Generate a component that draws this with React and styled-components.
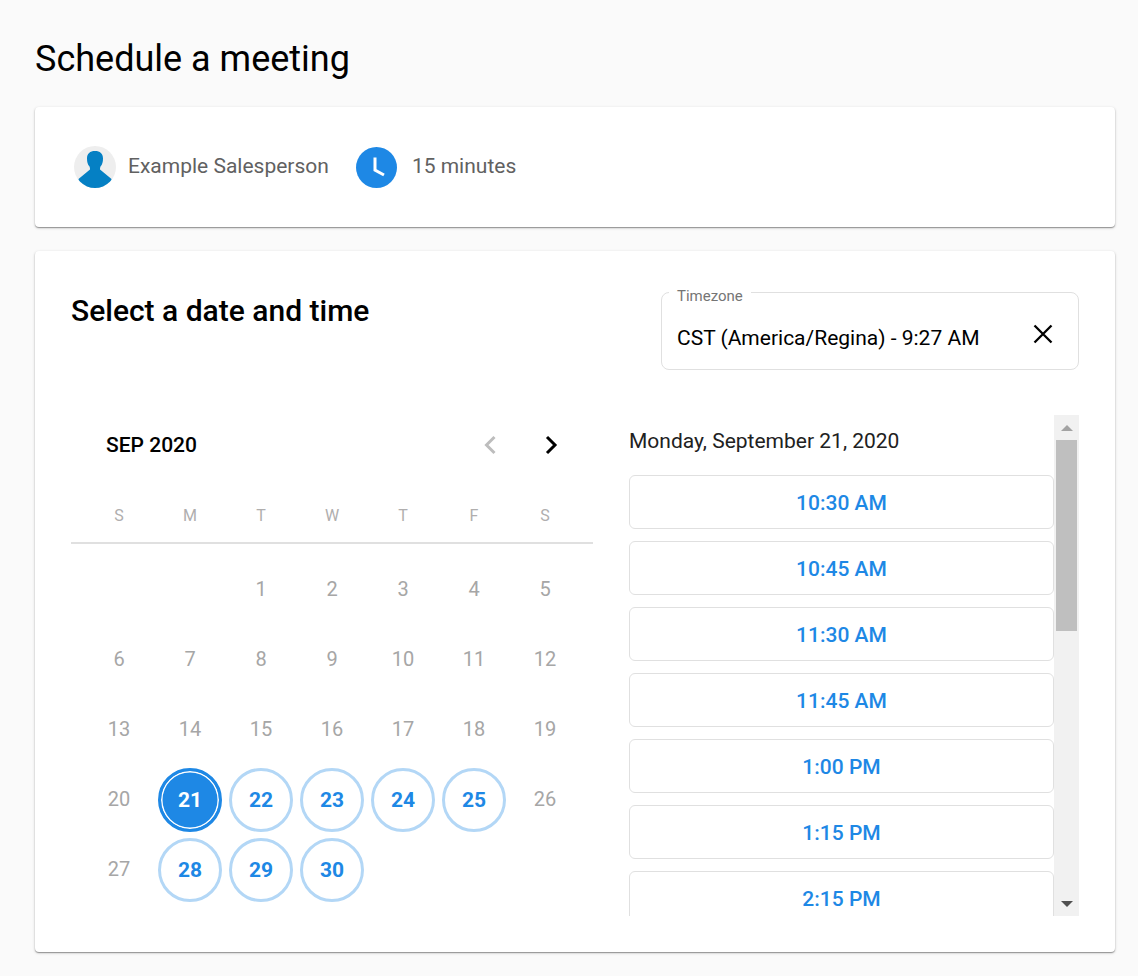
import React from 'react';
import styled, { createGlobalStyle } from 'styled-components';

const Global = createGlobalStyle`
  html, body { margin: 0; padding: 0; background: #fafafa; }
  body { font-family: Roboto, "Liberation Sans", sans-serif; }
  * { box-sizing: border-box; }
`;

const Page = styled.div`
  width: 1138px;
  height: 976px;
  padding: 0 23px 0 35px;
  overflow: hidden;
`;
const Title = styled.h1`
  margin: 0;
  height: 107px;
  padding-top: 39px;
  font-size: 36px;
  line-height: 40px;
  font-weight: 400;
  color: #000;
`;
const Card = styled.section`
  background: #fff;
  border-radius: 4px;
  box-shadow: 0 1px 3px rgba(0,0,0,.22), 0 1px 1px rgba(0,0,0,.3);
`;
const InfoCard = styled(Card)`
  height: 120px;
  display: flex;
  align-items: center;
  padding: 0 39px;
  margin-bottom: 24px;
`;
const Avatar = styled.svg`
  width: 42px;
  height: 42px;
  display: block;
  margin-right: 12px;
`;
const ClockBadge = styled.svg`
  width: 41px;
  height: 41px;
  display: block;
  margin: 0 15px 0 27px;
`;
const InfoText = styled.span`
  font-size: 21px;
  line-height: 22px;
  padding-bottom: 2px;
  color: #616161;
`;
const MainCard = styled(Card)`
  height: 701px;
  padding: 42px 36px 0;
`;
const Header = styled.div`
  display: flex;
  justify-content: space-between;
  align-items: flex-start;
  height: 122px;
`;
const Subtitle = styled.h2`
  margin: 0;
  font-size: 30px;
  line-height: 36px;
  font-weight: 500;
  color: #000;
`;
const TimezoneBox = styled.div`
  position: relative;
  width: 418px;
  height: 78px;
  margin-top: -1px;
  border: 1px solid #e0e0e0;
  border-radius: 8px;
  display: flex;
  align-items: center;
  justify-content: space-between;
  padding: 14px 25px 0 15px;
`;
const TimezoneLabel = styled.label`
  position: absolute;
  top: -6px;
  left: 7px;
  padding: 0 8px;
  background: #fff;
  font-size: 15px;
  line-height: 18px;
  color: #757575;
`;
const TimezoneValue = styled.span`
  font-size: 21px;
  line-height: 24px;
  color: #000;
`;
const CloseIcon = styled.svg`
  width: 20px;
  height: 20px;
  display: block;
  margin-top: -8px;
`;
const Body = styled.div`
  display: flex;
  align-items: flex-start;
`;
const Calendar = styled.div`
  width: 522px;
  margin-right: 36px;
`;
const CalendarHead = styled.div`
  height: 60px;
  display: flex;
  align-items: center;
  justify-content: space-between;
  padding: 0 30px 0 35px;
`;
const MonthLabel = styled.span`
  font-size: 21px;
  font-weight: 500;
  color: #000;
`;
const Arrows = styled.div`
  display: flex;
  gap: 37px;
`;
const Chevron = styled.svg`
  width: 24px;
  height: 24px;
  display: block;
`;
const WeekRow = styled.div`
  display: grid;
  grid-template-columns: repeat(7, 71px);
  justify-content: center;
  height: 69px;
  align-items: center;
  border-bottom: 2px solid #e0e0e0;
  padding-top: 14px;
`;
const WeekDay = styled.span`
  text-align: center;
  font-size: 16px;
  color: #b0aeae;
`;
const DayGrid = styled.div`
  display: grid;
  grid-template-columns: repeat(7, 71px);
  grid-auto-rows: 70px;
  justify-content: center;
  padding-top: 11px;
`;
const DayCell = styled.div`
  display: flex;
  align-items: center;
  justify-content: center;
`;
const DayNumber = styled.span`
  font-size: 20px;
  padding-bottom: 2px;
  color: #a6a6a6;
`;
const DayButton = styled.button`
  width: 64px;
  height: 64px;
  padding: 0 0 1px;
  border-radius: 50%;
  border: 3px solid #b3d7f6;
  background: #fff;
  color: #1e88e5;
  font: 700 21px Roboto, sans-serif;
  ${p => p.$selected && `
    border-color: #1e88e5;
    background: #1e88e5;
    color: #fff;
    box-shadow: inset 0 0 0 1.5px #fff;
  `}
`;
const Times = styled.div`
  width: 450px;
  height: 501px;
  display: flex;
`;
const SlotColumn = styled.div`
  width: 425px;
  height: 501px;
  overflow: hidden;
`;
const DateHeading = styled.div`
  height: 60px;
  padding-top: 14px;
  font-size: 21px;
  line-height: 24px;
  color: #212121;
`;
const Slot = styled.button`
  display: block;
  width: 425px;
  height: 54px;
  margin-bottom: 12px;
  padding: 1px 0 0;
  background: #fff;
  border: 1px solid #e0e0e0;
  border-radius: 6px;
  color: #1e88e5;
  font: 500 21px Roboto, sans-serif;
`;
const Scrollbar = styled.div`
  width: 25px;
  height: 501px;
  background: #f1f1f1;
  display: flex;
  flex-direction: column;
  align-items: center;
`;
const ScrollButton = styled.div`
  height: 25px;
  width: 100%;
  flex: none;
  display: flex;
  align-items: center;
  justify-content: center;
`;
const Triangle = styled.span`
  width: 0;
  height: 0;
  border-left: 6px solid transparent;
  border-right: 6px solid transparent;
  ${p => p.$down ? 'border-top: 6px solid #505050;' : 'border-bottom: 6px solid #a3a3a3;'}
`;
const Track = styled.div`
  flex: 1;
  width: 100%;
  padding: 0 2px;
`;
const Thumb = styled.div`
  height: 191px;
  background: #bfbfbf;
`;

const weekDays = ['S', 'M', 'T', 'W', 'T', 'F', 'S'];
const times = ['10:30 AM', '10:45 AM', '11:30 AM', '11:45 AM', '1:00 PM', '1:15 PM', '2:15 PM'];
const available = [21, 22, 23, 24, 25, 28, 29, 30];

export default function App() {
  const cells = [null, null];
  for (let d = 1; d <= 30; d++) cells.push(d);
  return (
    <Page>
      <Global />
      <Title>Schedule a meeting</Title>
      <InfoCard>
        <Avatar viewBox="0 0 42 42">
          <defs>
            <clipPath id="avatarClip"><circle cx="21" cy="21" r="21" /></clipPath>
          </defs>
          <circle cx="21" cy="21" r="21" fill="#eeeeee" />
          <path clipPath="url(#avatarClip)" fill="#0580c4" d="M13 12.500C13 7.500 16 5 21 5s8 2.500 8 7.500c0 3.500-.7 6-2.500 8-.5 1-.5 2-.5 3L37.500 33v9h-33v-9L16 23.500c0-1 0-2-.5-3-1.800-2-2.500-4.500-2.500-8z" />
        </Avatar>
        <InfoText>Example Salesperson</InfoText>
        <ClockBadge viewBox="0 0 41 41">
          <circle cx="20.500" cy="20.500" r="20.500" fill="#1e88e5" />
          <path d="M19 10.500v12.500l9 5" fill="none" stroke="#fff" strokeWidth="3" />
        </ClockBadge>
        <InfoText>15 minutes</InfoText>
      </InfoCard>
      <MainCard>
        <Header>
          <Subtitle>Select a date and time</Subtitle>
          <TimezoneBox>
            <TimezoneLabel>Timezone</TimezoneLabel>
            <TimezoneValue>CST (America/Regina) - 9:27 AM</TimezoneValue>
            <CloseIcon viewBox="0 0 20 20">
              <path d="M1.500 1.500l17 17M18.500 1.500l-17 17" stroke="#000" strokeWidth="2.300" fill="none" />
            </CloseIcon>
          </TimezoneBox>
        </Header>
        <Body>
          <Calendar>
            <CalendarHead>
              <MonthLabel>SEP 2020</MonthLabel>
              <Arrows>
                <Chevron viewBox="0 0 24 24">
                  <path d="M16.500 4l-8 8 8 8" fill="none" stroke="#bdbdbd" strokeWidth="3" />
                </Chevron>
                <Chevron viewBox="0 0 24 24">
                  <path d="M8 4l8 8-8 8" fill="none" stroke="#000" strokeWidth="3" />
                </Chevron>
              </Arrows>
            </CalendarHead>
            <WeekRow>
              {weekDays.map((d, i) => <WeekDay key={i}>{d}</WeekDay>)}
            </WeekRow>
            <DayGrid>
              {cells.map((d, i) => (
                <DayCell key={i}>
                  {d && (available.includes(d)
                    ? <DayButton $selected={d === 21}>{d}</DayButton>
                    : <DayNumber>{d}</DayNumber>)}
                </DayCell>
              ))}
            </DayGrid>
          </Calendar>
          <Times>
            <SlotColumn>
              <DateHeading>Monday, September 21, 2020</DateHeading>
              {times.map(t => <Slot key={t}>{t}</Slot>)}
            </SlotColumn>
            <Scrollbar>
              <ScrollButton><Triangle /></ScrollButton>
              <Track><Thumb /></Track>
              <ScrollButton><Triangle $down /></ScrollButton>
            </Scrollbar>
          </Times>
        </Body>
      </MainCard>
    </Page>
  );
}
